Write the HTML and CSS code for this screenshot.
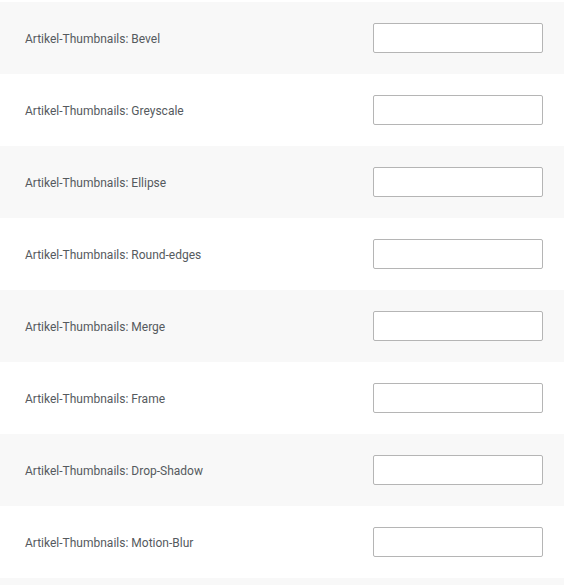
FILE: index.html
```html
<!DOCTYPE html>
<html>
<head>
<meta charset="utf-8">
<link rel="stylesheet" href="styles.css">
</head>
<body>
<div class="list">
  <div class="row alt"><label class="label">Artikel-Thumbnails: Bevel</label><input class="field" type="text"></div>
  <div class="row"><label class="label">Artikel-Thumbnails: Greyscale</label><input class="field" type="text"></div>
  <div class="row alt"><label class="label">Artikel-Thumbnails: Ellipse</label><input class="field" type="text"></div>
  <div class="row"><label class="label">Artikel-Thumbnails: Round-edges</label><input class="field" type="text"></div>
  <div class="row alt"><label class="label">Artikel-Thumbnails: Merge</label><input class="field" type="text"></div>
  <div class="row"><label class="label">Artikel-Thumbnails: Frame</label><input class="field" type="text"></div>
  <div class="row alt"><label class="label">Artikel-Thumbnails: Drop-Shadow</label><input class="field" type="text"></div>
  <div class="row"><label class="label">Artikel-Thumbnails: Motion-Blur</label><input class="field" type="text"></div>
  <div class="row alt tail"></div>
</div>
</body>
</html>
```
FILE: styles.css
```css
html, body { margin: 0; padding: 0; background: #fff; }
body { font-family: Roboto, "Noto Sans", sans-serif; }
.list { padding-top: 2px; }
.row {
  height: 72px;
  display: flex;
  align-items: center;
  justify-content: space-between;
  padding: 0 21px 0 25px;
  box-sizing: border-box;
}
.row.alt { background: #f8f8f8; }
.row.tail { height: 7px; }
.label { font-size: 12px; color: #555a5e; padding-top: 2px; }
.field {
  width: 170px;
  height: 30px;
  box-sizing: border-box;
  border: 1px solid #b5b5b5;
  border-radius: 2px;
  background: #fff;
  margin: 0;
  padding: 0 6px;
  outline: none;
}
```
